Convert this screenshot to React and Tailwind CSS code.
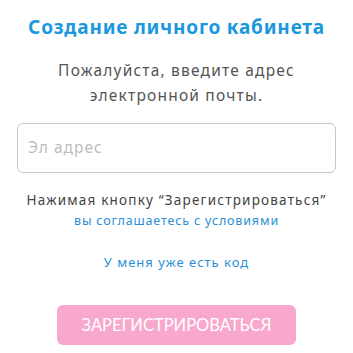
export default function App() {
  return (
    <div className="w-[353px] h-[353px] bg-white flex flex-col items-center" style={{ fontFamily: '"Noto Sans", "Liberation Sans", sans-serif' }}>
      <h1 className="mt-[13px] text-[19px] leading-[28px] font-bold tracking-[0.8px] text-[#1a98dd]">
        Создание личного кабинета
      </h1>
      <p className="mt-[17px] text-center text-[15.5px] leading-[25px] tracking-[1.2px] text-[#555]">
        Пожалуйста, введите адрес
        <br />
        электронной почты.
      </p>
      <div className="mt-[15px] w-[319px] h-[50px] rounded-[6px] border border-[#c8c8c8] flex items-center px-[10px]">
        <span className="text-[15.5px] tracking-[1px] text-[#bdbdbd]">Эл адрес</span>
      </div>
      <p className="mt-[17px] text-[13.5px] leading-[20px] tracking-[1.2px] text-[#444] text-center">
        Нажимая кнопку “Зарегистрироваться”
      </p>
      <a className="mt-[1px] text-[12.5px] leading-[20px] tracking-[0.85px] text-[#2a8fd6]">вы соглашаетесь с условиями</a>
      <a className="mt-[21px] text-[13px] leading-[20px] tracking-[1px] text-[#2a8fd6]">У меня уже есть код</a>
      <button className="mt-[33px] w-[239px] h-[40px] rounded-[6px] bg-[#f9a8cd] text-white text-[16.5px]" style={{ fontFamily: 'Lato, sans-serif' }}>
        ЗАРЕГИСТРИРОВАТЬСЯ
      </button>
    </div>
  );
}
